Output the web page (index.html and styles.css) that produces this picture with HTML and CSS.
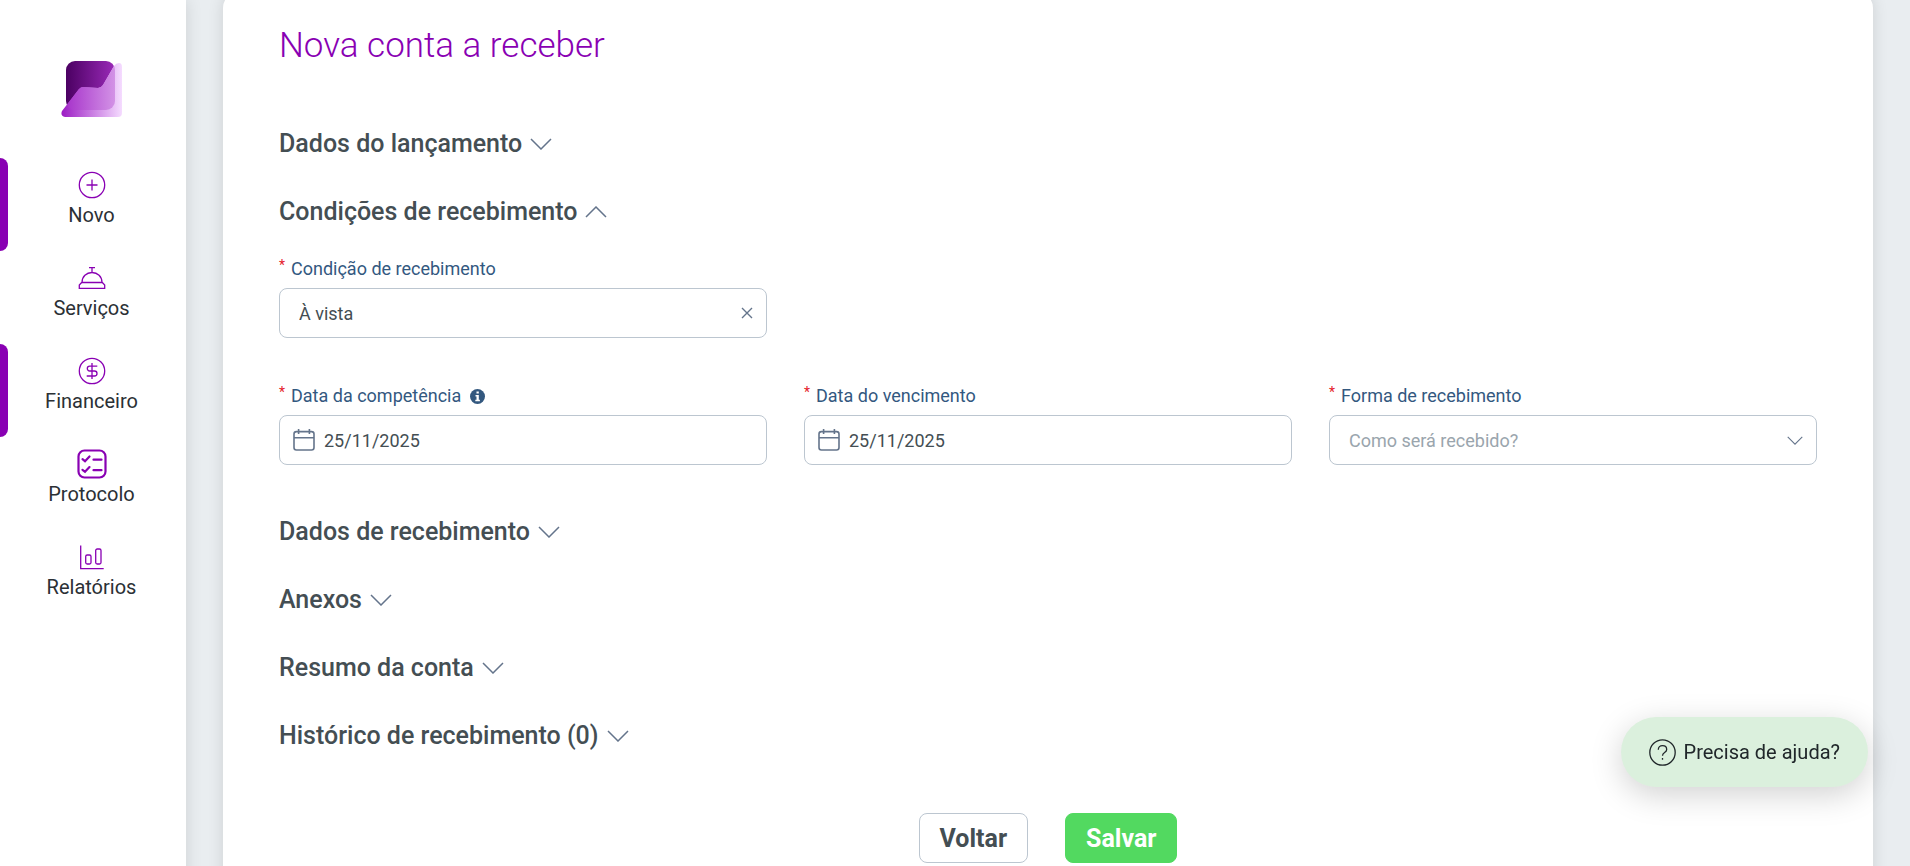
FILE: index.html
```html
<!DOCTYPE html>
<html lang="pt-BR">
<head>
<meta charset="UTF-8" />
<meta name="viewport" content="width=device-width, initial-scale=1" />
<title>Nova conta a receber</title>
<link rel="stylesheet" href="styles.css">
</head>
<body>

<!-- Shared icons -->
<svg class="sprite" xmlns="http://www.w3.org/2000/svg" aria-hidden="true">
  <symbol id="chevron" viewBox="0 0 22 12">
    <path d="M1 1l10 10L21 1" fill="none" stroke="currentColor" stroke-width="1.5"/>
  </symbol>
  <symbol id="calendar" viewBox="0 0 22 22">
    <g fill="none" stroke="currentColor" stroke-width="1.6">
      <rect x="1" y="2.6" width="20" height="18.4" rx="2.4"/>
      <path d="M1 8.7h20M5.6 0v5M16.4 0v5"/>
    </g>
  </symbol>
</svg>

<div class="layout">
  <aside class="sidebar">
    <a class="logo" href="#" aria-label="Início">
      <svg width="62" height="58" viewBox="0 0 62 58">
        <defs>
          <linearGradient id="logoDark" x1="0" x2="1">
            <stop offset="0" stop-color="#4b0062"/>
            <stop offset="1" stop-color="#9a2ab8"/>
          </linearGradient>
          <linearGradient id="logoLight" x1="0" x2="1">
            <stop offset="0" stop-color="#9c1cc4"/>
            <stop offset="1" stop-color="#f5dcff"/>
          </linearGradient>
          <linearGradient id="logoMix" x1="0" x2="1">
            <stop offset="0" stop-color="#a32bc8"/>
            <stop offset="1" stop-color="#d9a0ea"/>
          </linearGradient>
          <clipPath id="logoSquare"><rect x="5" y="1" width="49" height="49" rx="9"/></clipPath>
        </defs>
        <rect x="5" y="1" width="49" height="49" rx="9" fill="url(#logoDark)"/>
        <path d="M1 51L18 29Q20 27 22 27L37 28Q40 28 42 25L53 6Q55 3 58 3Q61 3 61 7V53Q61 57 57 57H4Q-1 56 1 51Z" fill="url(#logoLight)"/>
        <path clip-path="url(#logoSquare)" d="M1 51L18 29Q20 27 22 27L37 28Q40 28 42 25L53 6Q55 3 58 3Q61 3 61 7V53Q61 57 57 57H4Q-1 56 1 51Z" fill="url(#logoMix)"/>
      </svg>
    </a>
    <nav class="menu">
      <a class="menu-item active" href="#">
        <svg class="menu-icon" viewBox="0 0 30 30"><circle cx="15" cy="15" r="12.7"/><path d="M15 9.5v11M9.5 15h11"/></svg>
        Novo
      </a>
      <a class="menu-item" href="#">
        <svg class="menu-icon" viewBox="0 0 30 30"><path d="M12 4.6h6M15 4.6v5M5 19.5c0-6 4.4-10 10-10s10 4 10 10M4.7 19.5h20.6l2.4 2.5v3.3H2.3V22z"/></svg>
        Serviços
      </a>
      <a class="menu-item active" href="#">
        <svg class="menu-icon" viewBox="0 0 30 30"><circle cx="15" cy="15" r="12.7"/><path d="M20.3 10.2h-7.6a2.4 2.4 0 0 0 0 4.8h4.8a2.5 2.5 0 0 1 0 5H9.7M15 7v16"/></svg>
        Financeiro
      </a>
      <a class="menu-item" href="#">
        <svg class="menu-icon bold" viewBox="0 0 30 30"><rect x="1.5" y="1.5" width="27" height="27" rx="6"/><path d="M5.5 10.2l2.5 2L12.5 7.5M16.5 10.7h8M5.5 20.8l2.5 2 4.5-4.7M16.5 21.2h8"/></svg>
        Protocolo
      </a>
      <a class="menu-item" href="#">
        <svg class="menu-icon" viewBox="0 0 30 30"><path d="M3.7 3.5v23.2h23"/><rect x="8.7" y="13" width="5.3" height="9" rx="1.5"/><rect x="18.7" y="7" width="5.3" height="15" rx="1.5"/></svg>
        Relatórios
      </a>
    </nav>
  </aside>

  <main class="content">
    <form class="panel">
      <h1>Nova conta a receber</h1>

      <section class="section">
        <h2><button type="button" class="toggle">Dados do lançamento <svg class="chevron"><use href="#chevron"/></svg></button></h2>
      </section>

      <section class="section open">
        <h2><button type="button" class="toggle" aria-expanded="true">Condições de recebimento <svg class="chevron"><use href="#chevron"/></svg></button></h2>
        <div class="fields">
          <div class="field first">
            <label for="condicao"><span class="required">*</span>Condição de recebimento</label>
            <div class="control">
              <input type="text" id="condicao" value="À vista">
              <button type="button" class="clear" aria-label="Limpar">
                <svg width="12" height="12" viewBox="0 0 12 12"><path d="M1 1l10 10M11 1L1 11" stroke="currentColor" stroke-width="1.4"/></svg>
              </button>
            </div>
          </div>
          <div class="field">
            <label for="competencia"><span class="required">*</span>Data da competência
              <svg class="info" viewBox="0 0 15 15"><circle cx="7.5" cy="7.5" r="7.5" fill="currentColor"/><path d="M6.5 2.5h2.3v2H6.5zM5.5 6h3.3v4.7h1.1v1.5H5.3v-1.5h1.2V7.5h-1z" fill="#fff"/></svg>
            </label>
            <div class="control date">
              <svg class="calendar"><use href="#calendar"/></svg>
              <input type="text" id="competencia" value="25/11/2025">
            </div>
          </div>
          <div class="field">
            <label for="vencimento"><span class="required">*</span>Data do vencimento</label>
            <div class="control date">
              <svg class="calendar"><use href="#calendar"/></svg>
              <input type="text" id="vencimento" value="25/11/2025">
            </div>
          </div>
          <div class="field">
            <label for="forma"><span class="required">*</span>Forma de recebimento</label>
            <div class="control">
              <select id="forma">
                <option value="">Como será recebido?</option>
              </select>
              <svg class="arrow"><use href="#chevron"/></svg>
            </div>
          </div>
        </div>
      </section>

      <section class="section">
        <h2><button type="button" class="toggle">Dados de recebimento <svg class="chevron"><use href="#chevron"/></svg></button></h2>
      </section>
      <section class="section">
        <h2><button type="button" class="toggle">Anexos <svg class="chevron"><use href="#chevron"/></svg></button></h2>
      </section>
      <section class="section">
        <h2><button type="button" class="toggle">Resumo da conta <svg class="chevron"><use href="#chevron"/></svg></button></h2>
      </section>
      <section class="section">
        <h2><button type="button" class="toggle">Histórico de recebimento (0) <svg class="chevron"><use href="#chevron"/></svg></button></h2>
      </section>

      <div class="actions">
        <button type="button" class="btn">Voltar</button>
        <button type="submit" class="btn btn-save">Salvar</button>
      </div>
    </form>
  </main>
</div>

<button type="button" class="help">
  <svg width="27" height="27" viewBox="0 0 27 27" fill="none" stroke="currentColor" stroke-width="1.3">
    <circle cx="13.5" cy="13.5" r="12.7"/>
    <path d="M9.3 10.7c0-2.5 1.7-4 4.2-4s4.2 1.5 4.2 3.7c0 3.3-4.2 3-4.2 6.3M13.5 19v1.7"/>
  </svg>
  Precisa de ajuda?
</button>

</body>
</html>
```

FILE: styles.css
```css
* {
  box-sizing: border-box;
}

html {
  scrollbar-width: none;
}

body {
  margin: 0;
  font-family: Roboto, "Liberation Sans", sans-serif;
  font-size: 18px;
  color: #444e53;
  background: #e9edf0;
}

button, input, select {
  font: inherit;
  color: inherit;
}

.sprite {
  display: none;
}

.layout {
  display: flex;
  min-height: 100vh;
}

/* Sidebar */
.sidebar {
  flex: 0 0 186px;
  padding-top: 60px;
  background: #fff;
  box-shadow: 0 0 16px rgba(0, 0, 0, 0.12);
}

.logo {
  display: flex;
  justify-content: center;
  margin-bottom: 40px;
  padding-right: 3px;
}

.menu {
  padding-right: 3px;
}

.menu-item {
  position: relative;
  display: flex;
  flex-direction: column;
  align-items: center;
  gap: 2px;
  padding: 12px 0 22px;
  font-size: 20px;
  line-height: 27px;
  color: #2b3035;
  text-decoration: none;
}

.menu-item.active::before {
  content: "";
  position: absolute;
  left: 0;
  top: 0;
  width: 8px;
  height: 100%;
  background: #8900b3;
  border-radius: 0 8px 8px 0;
}

.menu-icon {
  width: 30px;
  height: 30px;
  fill: none;
  stroke: #8900b3;
  stroke-width: 1.3;
}

.menu-icon.bold {
  stroke-width: 2.2;
  stroke-linecap: round;
}

/* Form panel */
.content {
  flex: 1;
  padding: 0 37px;
}

.panel {
  min-height: 100vh;
  margin-top: -8px;
  padding: 33px 56px 56px;
  background: #fff;
  border-radius: 16px;
  box-shadow: 0 0 16px rgba(0, 0, 0, 0.12);
}

h1 {
  margin: 0 0 62px;
  font-size: 35px;
  line-height: 42px;
  font-weight: 300;
  color: #8900b3;
}

h2 {
  margin: 0;
  font-size: 25px;
  line-height: 30px;
  font-weight: 500;
}

.section {
  margin: 38px 0;
}

.section.open {
  margin-bottom: 52px;
}

.toggle {
  display: flex;
  align-items: center;
  gap: 8px;
  padding: 0;
  border: none;
  background: none;
  cursor: pointer;
}

.chevron {
  width: 22px;
  height: 12px;
  color: #64748b;
}

.open .chevron {
  transform: rotate(180deg);
}

/* Fields */
.fields {
  display: grid;
  grid-template-columns: repeat(3, 1fr);
  gap: 46px 37px;
  padding-top: 30px;
}

.field.first {
  grid-column: 1;
}

.field.first + .field {
  grid-column: 1;
}

label {
  display: flex;
  align-items: center;
  margin-bottom: 7px;
  line-height: 24px;
  color: #33587f;
}

.required {
  width: 12px;
  font-size: 14px;
  line-height: 16px;
  align-self: flex-start;
  color: #e5202a;
}

.info {
  width: 15px;
  height: 15px;
  margin-left: 9px;
}

.control {
  display: flex;
  align-items: center;
  height: 50px;
  padding: 0 13px 0 19px;
  border: 1px solid #bcc6d0;
  border-radius: 8px;
}

.control.date {
  gap: 9px;
  padding-left: 13px;
}

.control input,
.control select {
  flex: 1;
  min-width: 0;
  padding: 0;
  border: none;
  outline: none;
  background: none;
}

.control select {
  appearance: none;
  color: #9aa5ad;
}

.calendar {
  width: 22px;
  height: 22px;
  color: #64748b;
}

.clear {
  display: flex;
  padding: 0;
  border: none;
  background: none;
  color: #64748b;
  cursor: pointer;
}

.arrow {
  width: 16px;
  height: 9px;
  color: #64748b;
}

/* Buttons */
.actions {
  display: flex;
  justify-content: center;
  gap: 37px;
  margin-top: 62px;
}

.btn {
  height: 50px;
  padding: 0 20px;
  border: 1px solid #bcc6d0;
  border-radius: 8px;
  background: #fff;
  font-size: 25px;
  font-weight: 700;
  cursor: pointer;
}

.btn-save {
  border-color: #52d960;
  background: #52d960;
  color: #fff;
}

.help {
  position: fixed;
  right: 42px;
  bottom: 79px;
  display: flex;
  align-items: center;
  gap: 8px;
  height: 70px;
  padding: 0 28px;
  border: none;
  border-radius: 35px;
  background: #dbf0dd;
  box-shadow: 0 8px 32px rgba(0, 0, 0, 0.18);
  font-size: 20px;
  color: #20272a;
  cursor: pointer;
}
```
